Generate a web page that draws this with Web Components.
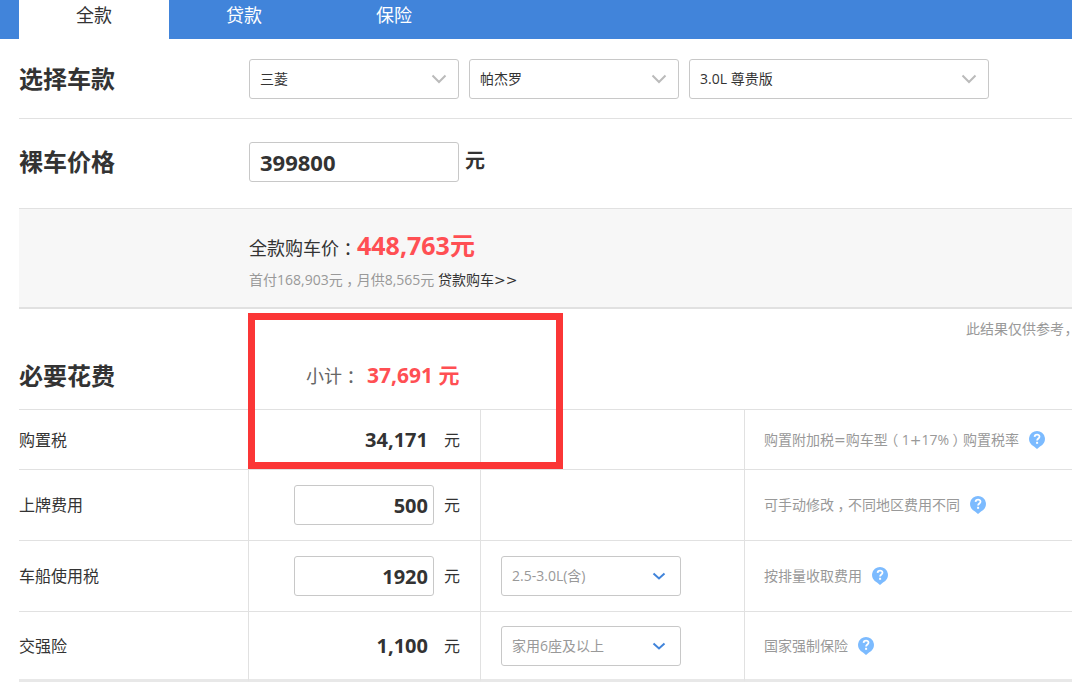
<!DOCTYPE html>
<html lang="zh-CN">
<head>
<meta charset="utf-8">
<meta name="viewport" content="width=device-width, initial-scale=1">
<title>购车计算器</title>
<style>
  body {
    margin: 0;
    background: #fff;
    color: #333;
    font: 14px/20px "Open Sans", "Noto Sans CJK SC", sans-serif;
    overflow-x: hidden;
    --line: #e1e1e1;
    --field: #c8c8c8;
    --muted: #999;
    --price: #ff4f53;
    --blue: #4184da;
  }
</style>
</head>
<body>
<calc-page></calc-page>
<script>
const define = (name, html, setup) => {
  const template = document.createElement('template');
  template.innerHTML = html;
  customElements.define(name, class extends HTMLElement {
    constructor() {
      super();
      this.attachShadow({ mode: 'open' }).append(template.content.cloneNode(true));
    }
    connectedCallback() {
      if (setup) setup(this, this.shadowRoot);
    }
  });
};

/* Full-width punctuation centred in its cell */
define('mid-mark', `<style>:host { display: inline-block; width: 1em; line-height: 1; text-align: center; font-feature-settings: "halt"; }</style><slot></slot>`);

define('tab-bar', `
  <style>
    :host { display: block; background: var(--blue); padding-left: 19px; }
    nav { display: flex; }
    a { width: 150px; padding-bottom: 9px; font-size: 18px; line-height: 30px; text-align: center; color: #fff; text-decoration: none; }
    a[aria-current] { background: #fff; color: #333; }
  </style>
  <nav><a href="#full" aria-current="page">全款</a><a href="#loan">贷款</a><a href="#insurance">保险</a></nav>`);

define('form-row', `
  <style>
    :host { display: flex; align-items: center; padding: 20px 0 19px; border-bottom: 1px solid var(--line); }
    h2 { flex: none; width: 230px; margin: 0; font-size: 24px; line-height: 40px; font-weight: 700; }
    div { display: flex; flex: 1; gap: 10px; }
  </style>
  <h2></h2><div><slot></slot></div>`,
  (el, root) => { root.querySelector('h2').textContent = el.getAttribute('heading'); });

define('drop-down', `
  <style>
    :host { display: inline-grid; width: 210px; vertical-align: top; }
    select, svg { grid-area: 1 / 1; }
    select {
      box-sizing: border-box; width: 100%; height: 40px; margin: 0; padding: 0 36px 0 10px;
      appearance: none; border: 1px solid var(--field); border-radius: 3px; background: #fff;
      color: inherit; font: inherit;
    }
    svg { place-self: center end; margin-right: 12px; pointer-events: none; fill: none; stroke: var(--chevron, #bbb); stroke-width: 2; }
    :host([small]) svg { margin-right: 14px; }
  </style>
  <select><option selected></option></select>
  <svg width="16" height="10" viewBox="0 0 16 10"><path d="M1.5 1.5 8 8l6.500-6.500"/></svg>`,
  (el, root) => {
    root.querySelector('select').setAttribute('aria-label', el.getAttribute('label'));
    root.querySelector('option').textContent = el.getAttribute('value');
    if (el.hasAttribute('small'))
      root.querySelector('path').setAttribute('d', 'M2.500 2.500 8 7.500l5.500-5');
  });

define('money-input', `
  <style>
    :host { display: inline-block; width: 140px; font-size: 20px; }
    input {
      display: block; box-sizing: border-box; width: 100%; height: 40px; margin: 0; padding: 0 5px 0 10px;
      border: 1px solid var(--field); border-radius: 3px; background: #fff;
      color: inherit; font: inherit; font-weight: 700; text-align: inherit;
    }
  </style>
  <input type="text" inputmode="numeric">`,
  (el, root) => {
    const input = root.querySelector('input');
    input.value = el.getAttribute('value');
    input.setAttribute('aria-label', el.getAttribute('label'));
  });

define('help-mark', `
  <style>:host { display: inline-flex; } svg { display: block; }</style>
  <svg width="16" height="18" viewBox="0 0 16 18" role="img" aria-label="说明">
    <path fill="#7cbbff" d="M8 0a8 8 0 0 1 3 15.400L8 18l-3-2.600A8 8 0 0 1 8 0z"/>
    <path fill="none" stroke="#fff" stroke-width="1.800" d="M5.600 5.900c.1-3.100 5-3 4.900-.1C10.400 7.600 8.100 7.500 8.100 9.600"/>
    <path fill="#fff" d="M7.100 10.800h2v2h-2z"/>
  </svg>`);

define('price-summary', `
  <style>
    :host { display: block; padding: 22px 0 13px 230px; background: #f7f7f7; border-bottom: 2px solid var(--line); }
    p { margin: 0; }
    .total { height: 34px; font-size: 18px; line-height: 34px; }
    strong { font-size: 25px; line-height: 1; color: var(--price); }
    .loan { line-height: 29px; color: var(--muted); }
    a { color: #333; text-decoration: none; }
    .op { font-family: "DejaVu Sans", sans-serif; line-height: 1; }
  </style>
  <p class="total">全款购车价<mid-mark>：</mid-mark><strong>448,763元</strong></p>
  <p class="loan">首付168,903元<mid-mark>，</mid-mark>月供8,565元 <a href="#loan">贷款购车<span class="op">&gt;&gt;</span></a></p>`);

define('cost-section', `
  <style>
    :host { display: block; position: relative; }
    .note { margin: 0; line-height: 40px; text-align: right; color: var(--muted); }
    .note mid-mark { width: 8px; }
    header { display: flex; align-items: center; padding-bottom: 6px; line-height: 54px; }
    h2 { width: 230px; margin: 0; font-size: 24px; }
    .sub { height: 54px; margin: 0; padding-left: 57px; font-size: 18px; color: #666; }
    .sub strong { padding-left: 7px; font-size: 21px; line-height: 1; color: var(--price); }
    .highlight { position: absolute; left: 229px; top: 4px; width: 301px; height: 142px; border: 7px solid #fb3636; pointer-events: none; }
  </style>
  <p class="note">此结果仅供参考<mid-mark>，</mid-mark></p>
  <header><h2>必要花费</h2><p class="sub">小计<mid-mark>：</mid-mark><strong>37,691 元</strong></p></header>
  <cost-table></cost-table>
  <div class="highlight"></div>`);

define('cost-table', `
  <style>
    :host { display: block; }
    table { width: 100%; table-layout: fixed; border-spacing: 0; border-top: 1px solid var(--line); }
    .name { width: 229px; } .amount { width: 232px; } .option { width: 264px; }
    th, td { box-sizing: border-box; height: 71px; padding: 0; border-bottom: 1px solid var(--line); vertical-align: middle; }
    tr:first-child > * { height: 60px; }
    tr:last-child > * { height: 70px; border-bottom: 3px solid #e8e8e8; }
    th { font-size: 16px; font-weight: 400; text-align: left; }
    td { border-left: 1px solid var(--line); }
    .value { display: flex; align-items: center; justify-content: flex-end; gap: 10px; padding-right: 20px; font-size: 16px; text-align: right; }
    output { padding-right: 6px; font-size: 20px; font-weight: 700; }
    drop-down { width: 180px; margin-left: 20px; color: var(--muted); --chevron: #4184da; }
    .tip { display: flex; align-items: center; gap: 10px; padding-left: 19px; color: var(--muted); white-space: nowrap; }
    .op { font-family: "DejaVu Sans", sans-serif; }
  </style>
  <table>
    <colgroup><col class="name"><col class="amount"><col class="option"><col></colgroup>
    <tbody>
      <tr>
        <th scope="row">购置税</th>
        <td><div class="value"><output>34,171</output><span>元</span></div></td>
        <td></td>
        <td><div class="tip"><span>购置附加税<span class="op">=</span>购车型<mid-mark>（</mid-mark>1<span class="op">+</span>17%<mid-mark>）</mid-mark>购置税率</span><help-mark></help-mark></div></td>
      </tr>
      <tr>
        <th scope="row">上牌费用</th>
        <td><div class="value"><money-input label="上牌费用" value="500"></money-input><span>元</span></div></td>
        <td></td>
        <td><div class="tip"><span>可手动修改<mid-mark>，</mid-mark>不同地区费用不同</span><help-mark></help-mark></div></td>
      </tr>
      <tr>
        <th scope="row">车船使用税</th>
        <td><div class="value"><money-input label="车船使用税" value="1920"></money-input><span>元</span></div></td>
        <td><drop-down small label="排量" value="2.5-3.0L(含)"></drop-down></td>
        <td><div class="tip"><span>按排量收取费用</span><help-mark></help-mark></div></td>
      </tr>
      <tr>
        <th scope="row">交强险</th>
        <td><div class="value"><output>1,100</output><span>元</span></div></td>
        <td><drop-down small label="座位数" value="家用6座及以上"></drop-down></td>
        <td><div class="tip"><span>国家强制保险</span><help-mark></help-mark></div></td>
      </tr>
    </tbody>
  </table>`);

define('calc-page', `
  <style>
    :host { display: block; overflow: hidden; }
    main { margin-left: 19px; }
    .model { width: 300px; }
    .price { padding: 23px 0 26px; }
    .price money-input { width: 210px; font-size: 22px; }
    .unit { margin-left: -4px; font-size: 20px; line-height: 38px; font-weight: 700; }
  </style>
  <tab-bar></tab-bar>
  <main>
    <form-row heading="选择车款">
      <drop-down label="品牌" value="三菱"></drop-down>
      <drop-down label="车系" value="帕杰罗"></drop-down>
      <drop-down class="model" label="车型" value="3.0L 尊贵版"></drop-down>
    </form-row>
    <form-row class="price" heading="裸车价格">
      <money-input label="裸车价格" value="399800"></money-input>
      <span class="unit">元</span>
    </form-row>
    <price-summary></price-summary>
    <cost-section></cost-section>
  </main>`);
</script>
</body>
</html>
